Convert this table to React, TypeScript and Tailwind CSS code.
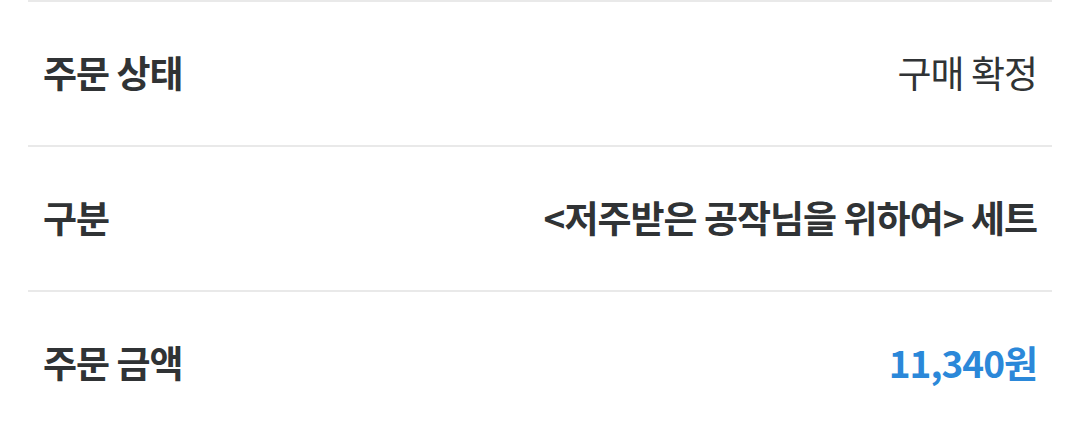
const rows = [
  { label: "주문 상태", value: "구매 확정", kind: "plain" },
  { label: "구분", value: "<저주받은 공작님을 위하여> 세트", kind: "bold" },
  { label: "주문 금액", value: "11,340원", kind: "price" },
];

export default function App() {
  return (
    <div
      className="w-[1080px] h-[436px] bg-white px-[28px] overflow-hidden"
      style={{ fontFamily: '"Noto Sans CJK KR", "Noto Sans", sans-serif' }}
    >
      {rows.map((r) => (
        <div
          key={r.label}
          className="h-[145px] border-t-2 border-[#e9e9e9] flex items-center justify-between px-[15px] pb-[2px]"
        >
          <span className="text-[37px] font-bold text-[#303335] tracking-[-1px]">{r.label}</span>
          <span
            className={
              r.kind === "plain"
                ? "text-[37px] font-normal text-[#303335] tracking-[-1px]"
                : r.kind === "bold"
                ? "text-[37px] font-bold text-[#303335] tracking-[-1px]"
                : "text-[37px] font-bold text-[#2b88d9] tracking-[-1px]"
            }
          >
            {r.value}
          </span>
        </div>
      ))}
    </div>
  );
}
